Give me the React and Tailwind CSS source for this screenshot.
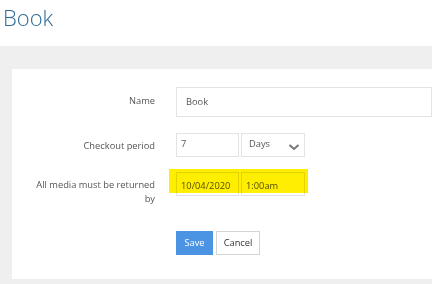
import React from "react";

export default function App() {
  const font = { fontFamily: '"Open Sans", "Liberation Sans", sans-serif' };
  return (
    <div className="w-[432px] h-[284px] overflow-hidden bg-white" style={font}>
      <div className="h-[46px] pl-[3px] pt-[2px]">
        <h1 className="text-[22px] leading-[30px] font-light text-[#2f6a94]">Book</h1>
      </div>
      <div className="bg-[#efefef] h-[238px] pt-[23px] pl-[12px] pb-[5px]">
        <div className="bg-white h-[210px] pt-[18px] relative">
          <div className="flex items-center">
            <div className="w-[144px] pr-[1px] text-right text-[9.3px] text-[#555] leading-[14px] -mt-[3px]">Name</div>
            <div className="ml-[20px] h-[30px] flex-1 border border-[#e3e3e3] flex items-center pl-[9px] text-[9.3px] text-[#555]">Book</div>
          </div>
          <div className="flex items-start mt-[16px]">
            <div className="w-[144px] pr-[1px] text-right text-[9.3px] text-[#555] leading-[14px] pt-[6px]">Checkout period</div>
            <div className="ml-[20px] flex gap-[2px]">
              <div className="w-[63px] h-[24px] border border-[#e3e3e3] pl-[4px] pt-[3px] text-[9.3px] leading-[14px] text-[#555]">7</div>
              <div className="w-[64px] h-[24px] border border-[#e3e3e3] pl-[7px] pt-[3px] text-[9.3px] leading-[14px] text-[#555] flex justify-between pr-[4px]">
                <span>Days</span>
                <svg width="12" height="8" viewBox="0 0 12 8" className="mt-[6px]">
                  <path d="M1.5 2 L6 6 L10.5 2" fill="none" stroke="#777" strokeWidth="2" />
                </svg>
              </div>
            </div>
          </div>
          <div className="flex items-start mt-[15px]">
            <div className="w-[144px] pr-[1px] text-right text-[9.3px] text-[#555] leading-[14px] pt-[6px] whitespace-nowrap">All media must be returned<br />by</div>
            <div className="ml-[20px] flex gap-[2px] relative">
              <div className="w-[63px] h-[24px] border border-[#e3e3e3] pl-[4px] pt-[6px] text-[9.3px] leading-[14px] text-[#555]">10/04/2020</div>
              <div className="w-[64px] h-[24px] border border-[#e3e3e3] pl-[4px] pt-[6px] text-[9.3px] leading-[14px] text-[#555]">1:00am</div>
              <div className="absolute left-[-7px] top-[-3px] w-[139px] h-[24px] bg-[#ffee00] mix-blend-multiply" />
            </div>
          </div>
          <div className="flex mt-[25px] ml-[164px] gap-[3px]">
            <button className="w-[37px] h-[24px] bg-[#4a94e3] text-white text-[9.3px]">Save</button>
            <button className="w-[44px] h-[24px] border border-[#d5d5d5] bg-white text-[#333] text-[9.3px]">Cancel</button>
          </div>
        </div>
      </div>
    </div>
  );
}
